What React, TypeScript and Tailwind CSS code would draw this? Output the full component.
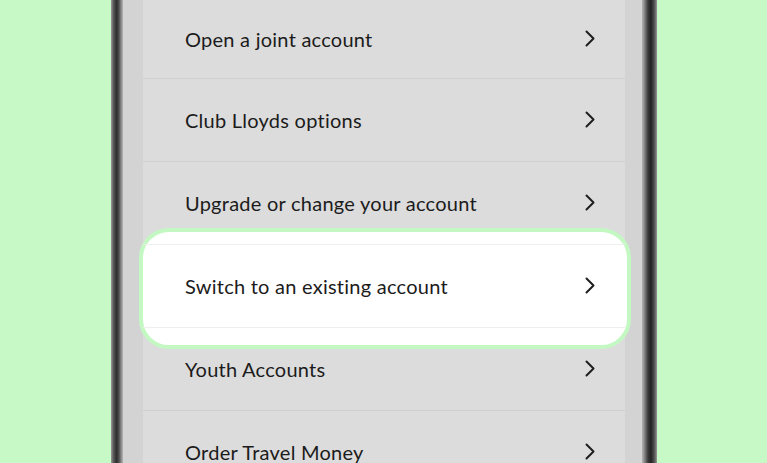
import React from "react";

const rows = [
  "Open a joint account",
  "Club Lloyds options",
  "Upgrade or change your account",
  "Switch to an existing account",
  "Youth Accounts",
  "Order Travel Money",
];

function Chevron() {
  return (
    <svg width="11" height="17" viewBox="0 0 11 17" fill="none" className="shrink-0">
      <polyline
        points="1.5,1.5 8.5,8.5 1.5,15.5"
        stroke="#1f1f1f"
        strokeWidth="2"
        strokeLinecap="round"
        strokeLinejoin="round"
      />
    </svg>
  );
}

function Row({ label, first }: { label: string; first?: boolean }) {
  return (
    <div
      className={
        "flex items-center justify-between pl-[42px] pr-[29px] pb-px border-b border-[#cfcfcf] " +
        (first ? "h-[79px]" : "h-[83px]")
      }
    >
      <span className="text-[20px] text-[#1b1b1b] tracking-[0.25px]">{label}</span>
      <Chevron />
    </div>
  );
}

export default function App() {
  return (
    <div
      className="w-[767px] h-[463px] overflow-hidden bg-[#c7f9c6] flex justify-center pl-[1px]"
      style={{ fontFamily: "Lato, 'Open Sans', sans-serif" }}
    >
      <div className="flex h-full">
        <div className="w-[12px] h-full bg-[linear-gradient(to_right,#9a9a9a_0%,#5a5a5a_20%,#2e2e2e_45%,#4a4a4a_65%,#8a8a8a_85%,#b5b5b5_100%)]" />
        <div className="w-[20px] h-full bg-[#d3d3d3]" />
        <div className="w-[482px] h-full bg-[#dcdcdc]">
          {rows.map((label, i) =>
            i === 3 ? (
              <div key={label} className="relative z-10">
                <div className="absolute -left-[4px] -right-[6px] -top-[16px] -bottom-[21px] bg-white border-[4px] border-[#c4f8c3] rounded-[30px]" />
                <div className="relative -mt-px h-[84px] flex items-center justify-between pl-[42px] pr-[29px] pb-px border-y border-[#efefef]">
                  <span className="text-[20px] text-[#1b1b1b] tracking-[0.25px]">{label}</span>
                  <Chevron />
                </div>
              </div>
            ) : (
              <Row key={label} label={label} first={i === 0} />
            )
          )}
        </div>
        <div className="w-[17px] h-full bg-[#d3d3d3]" />
        <div className="w-[15px] h-full bg-[linear-gradient(to_right,#b5b5b5_0%,#8a8a8a_15%,#3a3a3a_40%,#222222_60%,#5a5a5a_85%,#9a9a9a_100%)]" />
      </div>
    </div>
  );
}
